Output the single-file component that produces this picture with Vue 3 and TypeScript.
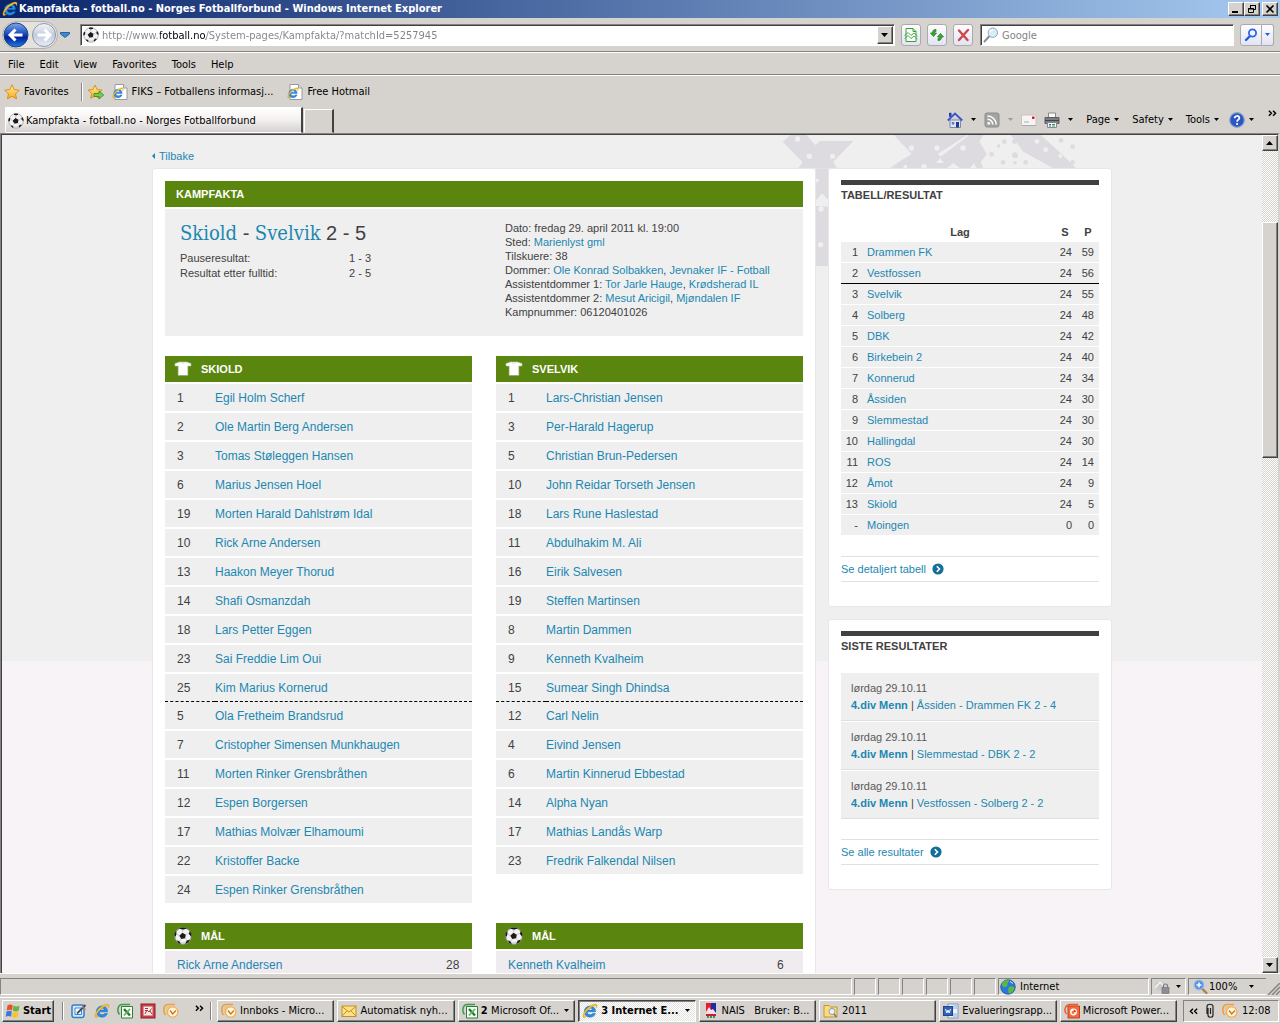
<script setup lang="ts">
interface Player { no: number; name: string }
interface Team { title: string; players: Player[]; goals: { name: string; minute: number }[] }
interface Standing { pos: string; team: string; played: number; points: number }

const toPlayers = (rows: [number, string][]): Player[] => rows.map(([no, name]) => ({ no, name }))

const starters = 11

const teams: Team[] = [
  {
    title: 'SKIOLD',
    players: toPlayers([
      [1, 'Egil Holm Scherf'], [2, 'Ole Martin Berg Andersen'], [3, 'Tomas Støleggen Hansen'],
      [6, 'Marius Jensen Hoel'], [19, 'Morten Harald Dahlstrøm Idal'], [10, 'Rick Arne Andersen'],
      [13, 'Haakon Meyer Thorud'], [14, 'Shafi Osmanzdah'], [18, 'Lars Petter Eggen'],
      [23, 'Sai Freddie Lim Oui'], [25, 'Kim Marius Kornerud'], [5, 'Ola Fretheim Brandsrud'],
      [7, 'Cristopher Simensen Munkhaugen'], [11, 'Morten Rinker Grensbråthen'], [12, 'Espen Borgersen'],
      [17, 'Mathias Molvær Elhamoumi'], [22, 'Kristoffer Backe'], [24, 'Espen Rinker Grensbråthen'],
    ]),
    goals: [{ name: 'Rick Arne Andersen', minute: 28 }],
  },
  {
    title: 'SVELVIK',
    players: toPlayers([
      [1, 'Lars-Christian Jensen'], [3, 'Per-Harald Hagerup'], [5, 'Christian Brun-Pedersen'],
      [10, 'John Reidar Torseth Jensen'], [18, 'Lars Rune Haslestad'], [11, 'Abdulhakim M. Ali'],
      [16, 'Eirik Salvesen'], [19, 'Steffen Martinsen'], [8, 'Martin Dammen'],
      [9, 'Kenneth Kvalheim'], [15, 'Sumear Singh Dhindsa'], [12, 'Carl Nelin'],
      [4, 'Eivind Jensen'], [6, 'Martin Kinnerud Ebbestad'], [14, 'Alpha Nyan'],
      [17, 'Mathias Landås Warp'], [23, 'Fredrik Falkendal Nilsen'],
    ]),
    goals: [{ name: 'Kenneth Kvalheim', minute: 6 }],
  },
]

const standings: Standing[] = ([
  ['1', 'Drammen FK', 24, 59], ['2', 'Vestfossen', 24, 56], ['3', 'Svelvik', 24, 55],
  ['4', 'Solberg', 24, 48], ['5', 'DBK', 24, 42], ['6', 'Birkebein 2', 24, 40],
  ['7', 'Konnerud', 24, 34], ['8', 'Åssiden', 24, 30], ['9', 'Slemmestad', 24, 30],
  ['10', 'Hallingdal', 24, 30], ['11', 'ROS', 24, 14], ['12', 'Åmot', 24, 9],
  ['13', 'Skiold', 24, 5], ['-', 'Moingen', 0, 0],
] as [string, string, number, number][]).map(([pos, team, played, points]) => ({ pos, team, played, points }))

const results = ['Åssiden - Drammen FK 2 - 4', 'Slemmestad - DBK 2 - 2', 'Vestfossen - Solberg 2 - 2']
const menus = ['File', 'Edit', 'View', 'Favorites', 'Tools', 'Help']
const quick = ['i-desk', 'i-ie', 'i-excel', 'i-access', 'i-outlook']
const tasks = [
  { icon: 'i-outlook', count: '', label: 'Innboks - Micro...', more: false, active: false },
  { icon: 'i-mail', count: '', label: 'Automatisk nyh...', more: false, active: false },
  { icon: 'i-excel', count: '2 ', label: 'Microsoft Of...', more: true, active: false },
  { icon: 'i-ie', count: '', label: '3 Internet E...', more: true, active: true },
  { icon: 'i-nais', count: '', label: 'NAIS   Bruker: B...', more: false, active: false },
  { icon: 'i-folder', count: '', label: '2011', more: false, active: false },
  { icon: 'i-word', count: '', label: 'Evalueringsrapp...', more: false, active: false },
  { icon: 'i-ppt', count: '', label: 'Microsoft Power...', more: false, active: false },
]
</script>

<template>
  <svg class="defs" width="0" height="0" aria-hidden="true">
    <defs>
      <linearGradient id="g-blue" x1="0" y1="0" x2="0" y2="1">
        <stop offset="0" stop-color="#7fa6ea" /><stop offset=".45" stop-color="#1a4cc0" /><stop offset=".6" stop-color="#02209a" /><stop offset="1" stop-color="#1f7fe8" />
      </linearGradient>
      <linearGradient id="g-pale" x1="0" y1="0" x2="0" y2="1">
        <stop offset="0" stop-color="#f4f6fa" /><stop offset=".5" stop-color="#c3cbdc" /><stop offset="1" stop-color="#e8edf6" />
      </linearGradient>
      <linearGradient id="g-star" x1="0" y1="0" x2="0" y2="1">
        <stop offset="0" stop-color="#fff2a0" /><stop offset="1" stop-color="#f7a81b" />
      </linearGradient>
    </defs>
    <symbol id="i-ie" viewBox="0 0 16 16">
      <path d="M13.500 8.800H5.200c.1 2 1.300 3 3 3 1.200 0 2-.5 2.500-1.200h2.700c-.8 2.300-2.800 3.600-5.300 3.600-3.400 0-5.700-2.300-5.700-5.600C2.400 5.300 4.800 3 8 3c3.500 0 5.700 2.300 5.500 5.800zM5.300 7.100h5.300C10.400 5.700 9.500 5 8 5 6.500 5 5.600 5.800 5.300 7.100z" fill="#2b8ee6" stroke="#0f5fb8" stroke-width=".5" />
      <path d="M1.500 14.500C-.6 12.600 3.200 6 7.800 3.200 11 1 14.400.2 15 2c.3.900 0 2-.6 3.100.1-1.400-.2-2.400-1.400-2.300C10 3 4 8 2.600 11.600c-.6 1.600.1 2.200 1.900 1.500-1.300 1.400-2.400 1.900-3 1.400z" fill="#f6c02c" stroke="#c48a10" stroke-width=".3" />
    </symbol>
    <symbol id="i-ball" viewBox="0 0 16 16">
      <circle cx="8" cy="8" r="7.300" fill="#f2f2f2" stroke="#a2a2a2" stroke-width=".8" />
      <path d="M3 13a7 7 0 0 0 11-2c-2 2-7 3.500-11 2z" fill="#cfcfcf" />
      <path d="M7.500 5l3 1.800-.6 3.300-3.400.6L4.700 7.800z" fill="#1a1a1a" />
      <path d="M6 1.300l2 .7 2-.7L8 .9zM1 8.200l.8-2.200-.2-1-.6 1zM15 7.500l-1.300-1.500.5-1.300.7 1.300zM3.500 12.800l1 .2.600 1.300-.9-.4zM13.200 12l-1.500.4-.6 1.600 1.300-.8z" fill="#1a1a1a" stroke="#1a1a1a" />
      <path d="M8 2l-.5 3M2 5.700l2.700 2.100M13.500 5.500l-3 1.300M6.500 10.700l-1.900 2.100M9.900 10.100l1.700 2.100" stroke="#b5b5b5" stroke-width=".6" />
    </symbol>
    <symbol id="i-shirt" viewBox="0 0 18 16">
      <path d="M1 2.500L5.500 1h7L17 2.500V5h-3.200v9.500H4.200V5H1z" fill="#fff" stroke="#b9c9a0" stroke-width=".6" />
      <path d="M4.200 14.500h9.600" stroke="#9aa58a" />
      <path d="M6.500 1.200c1 1.200 4 1.200 5 0" fill="none" stroke="#ddd" />
    </symbol>
    <symbol id="i-star" viewBox="0 0 16 16">
      <path d="M8 .8l2.200 4.800 5.200.6-3.900 3.500 1.100 5.200L8 12.300l-4.600 2.600 1.100-5.200L.6 6.200l5.200-.6z" fill="url(#g-star)" stroke="#d98a10" stroke-width=".9" stroke-linejoin="round" />
    </symbol>
    <symbol id="i-stargo" viewBox="0 0 16 16">
      <path d="M7 1l2 4.500 5 .5-3.700 3.300 1 5L7 11.800 2.700 14.300l1-5L0 6l5-.5z" fill="url(#g-star)" stroke="#d98a10" stroke-width=".9" stroke-linejoin="round" />
      <path d="M6 9.500h5V7l4.700 4-4.700 4v-2.500H6z" fill="#6fcf53" stroke="#2c8a1c" stroke-width=".8" />
    </symbol>
    <symbol id="i-iepage" viewBox="0 0 16 16">
      <path d="M3 .5h8.500L15 4v11.500H3z" fill="#fff" stroke="#9a9a9a" /><path d="M11.500.5V4H15" fill="#e4e4e4" stroke="#9a9a9a" />
      <use href="#i-ie" x="0" y="3" width="12" height="12" />
    </symbol>
    <symbol id="i-home" viewBox="0 0 16 16">
      <path d="M3 8h10.500v7.500H3z" fill="#dfe5f4" stroke="#7c89b0" /><path d="M2 .8h2.500v4H2z" fill="#2440b8" />
      <path d="M.8 8.500L8 1.500l7.300 7" fill="none" stroke="#3a55c4" stroke-width="1.800" /><path d="M9 10h3v5.500H9z" fill="#223c8c" /><path d="M4.800 10h2.400v2.500H4.800z" fill="#5b76c8" />
    </symbol>
    <symbol id="i-rss" viewBox="0 0 16 16">
      <rect x="1" y="1" width="14" height="14" rx="2" fill="#a3a3a3" stroke="#8b8b8b" />
      <circle cx="4.800" cy="11.300" r="1.400" fill="#fff" /><path d="M3.500 7.200a5.300 5.300 0 0 1 5.300 5.300M3.500 3.900a8.700 8.700 0 0 1 8.700 8.700" fill="none" stroke="#fff" stroke-width="1.500" />
    </symbol>
    <symbol id="i-letter" viewBox="0 0 16 16">
      <rect x=".5" y="3" width="14.500" height="10.500" fill="#f7f4f4" stroke="#c9c4c4" /><rect x="11" y="4.500" width="2.500" height="2.500" fill="#d3202c" /><path d="M3 10h5M1 13.500h14" stroke="#a9a9b4" />
    </symbol>
    <symbol id="i-print" viewBox="0 0 16 16">
      <path d="M4.500 1h7v5h-7z" fill="#fafafa" stroke="#888" /><path d="M1 5.500h14v6H1z" fill="#7b7f84" stroke="#5c5f63" /><path d="M1 8.500h14" stroke="#44464a" />
      <path d="M3.500 10.500h9v5h-9z" fill="#f4f6f8" stroke="#888" /><path d="M5 12.500h2M5 14h2" stroke="#2b6fc8" /><path d="M8 12.500h3M8 14h3" stroke="#3f9a50" />
    </symbol>
    <symbol id="i-help" viewBox="0 0 16 16">
      <circle cx="8" cy="8" r="7.300" fill="#2c56c4" stroke="#8fa0c8" stroke-width="1.200" />
      <path d="M5.700 6.300C5.700 3.200 10.500 3.300 10.400 6c0 1.700-2.300 1.700-2.300 3.700" fill="none" stroke="#fff" stroke-width="1.700" /><circle cx="8.100" cy="12" r="1.100" fill="#fff" />
    </symbol>
    <symbol id="i-glass" viewBox="0 0 16 16">
      <path d="M1.500 14.500l4.500-5" stroke="#8b8f96" stroke-width="2" stroke-linecap="round" /><circle cx="9.800" cy="5.700" r="4.700" fill="#d8ecfa" stroke="#90a4b4" />
      <path d="M7 5c.3-1.500 1.500-2.300 3-2.300" fill="none" stroke="#fff" stroke-width="1.300" />
    </symbol>
    <symbol id="i-find" viewBox="0 0 16 16">
      <path d="M3 13l3.500-3.500" stroke="#1f5be0" stroke-width="2.400" stroke-linecap="round" /><circle cx="9.500" cy="6" r="3.600" fill="#f2f6ff" stroke="#2a66ea" stroke-width="1.800" />
    </symbol>
    <symbol id="i-zoom" viewBox="0 0 16 16">
      <path d="M9 9.500l4.500 4.500" stroke="#b07a3a" stroke-width="2.200" stroke-linecap="round" /><circle cx="6" cy="6" r="4.800" fill="#4f93ec" stroke="#9fb7d8" stroke-width="1.200" /><path d="M3.500 6h5M6 3.500v5" stroke="#fff" stroke-width="1.500" />
    </symbol>
    <symbol id="i-compat" viewBox="0 0 16 16">
      <path d="M3 1.500h7L13 4.500V14.500H3z" fill="#fff" stroke="#38a038" /><path d="M10 1.500v3h3" fill="none" stroke="#38a038" />
      <path d="M1.500 8.500L5 5.500l3 3L11 6l3.500 3M1.500 11.500L5 8.500l3 3L11 9l3.500 3" fill="none" stroke="#49a849" />
    </symbol>
    <symbol id="i-refresh" viewBox="0 0 16 16">
      <path d="M1.500 6h2C3.500 3.500 4.500 2.500 7 2.500v2C6.200 4.500 5.500 5 5.500 6h2l-3 3.500z" fill="#3aa832" stroke="#22801c" stroke-width=".8" />
      <path d="M14.500 10h-2c0 2.500-1 3.500-3.500 3.500v-2c.8 0 1.500-.5 1.500-1.500h-2l3-3.500z" fill="#3aa832" stroke="#22801c" stroke-width=".8" />
    </symbol>
    <symbol id="i-stop" viewBox="0 0 16 16"><path d="M4 3.500l8.500 9.500M13 3L4 13" stroke="#cc4a4a" stroke-width="2.400" stroke-linecap="round" /></symbol>
    <symbol id="i-flag" viewBox="0 0 16 16">
      <path d="M2.500 2.500Q5 .8 7.700 2.300L7 7.500Q4.500 6 1.700 7.600z" fill="#e8502c" /><path d="M8.500 2.600q2.700 1.600 6 .2l-.9 5q-2.800 1.400-5.800-.2z" fill="#6cb33a" />
      <path d="M1.500 8.600q2.700-1.500 5.300-.1l-.7 5.200Q3.500 12.200.7 13.700z" fill="#3a78dc" /><path d="M7.700 8.700q2.900 1.500 5.900.2l-.9 5.100q-2.900 1.300-5.700-.1z" fill="#f8c32c" />
    </symbol>
    <symbol id="i-desk" viewBox="0 0 16 16">
      <rect x="1" y="2" width="12" height="12.500" rx="2" fill="#d6e8fa" stroke="#2f7fd0" stroke-width="1.500" /><path d="M4 5h6.500v6.500H4z" fill="#fff" stroke="#3c86cc" /><path d="M6 10.500L14.500 2" stroke="#3d4d66" stroke-width="1.800" /><path d="M11 3.500l3.500 3" stroke="#e07a30" stroke-width="1.500" />
    </symbol>
    <symbol id="i-excel" viewBox="0 0 16 16">
      <path d="M4.500 3.500h11v11.500h-11z" fill="#f8fcf8" stroke="#2f7d38" /><path d="M2.500 11.500C0 9 0 1.500 5.500 1.500H13" fill="none" stroke="#3f9a48" stroke-width="1.500" />
      <path d="M7 6l6 6.500" stroke="#247a30" stroke-width="2.400" /><path d="M13 6l-6 6.500" stroke="#5fb45c" stroke-width="1.800" />
    </symbol>
    <symbol id="i-access" viewBox="0 0 16 16">
      <rect x="1" y="1" width="14" height="14" fill="#c8404a" stroke="#8e1c28" /><path d="M3.500 3.500h9v9h-9z" fill="#f8e8e8" /><path d="M5 11l2-4 2 2 2.500-3.500M5 5.500h3M5 7.500h2M10 8l2 3" fill="none" stroke="#a8323c" />
    </symbol>
    <symbol id="i-outlook" viewBox="0 0 16 16">
      <path d="M2.500 12C0 9 0 1.500 5 1.500h7" fill="none" stroke="#eda040" stroke-width="1.700" /><path d="M4 12V4h7" fill="none" stroke="#f2b868" />
      <circle cx="9.700" cy="9" r="5.200" fill="#fff4dc" stroke="#efb25a" stroke-width="1.300" /><path d="M7 7.500L9.700 11 13 7.500" fill="none" stroke="#c77a1c" stroke-width="1.400" />
    </symbol>
    <symbol id="i-mail" viewBox="0 0 16 16"><rect x="1" y="3" width="14" height="10.500" fill="#fbe18a" stroke="#c98f1a" /><path d="M1 3.500l7 5.500 7-5.500M1 13l5-5M15 13l-5-5" fill="none" stroke="#c98f1a" /></symbol>
    <symbol id="i-nais" viewBox="0 0 16 16"><path d="M3 0h5v11H3z" fill="#e81c24" /><path d="M8 0h5v11H8z" fill="#1c2ca8" /><path d="M3 9l3-5 2 3 2-1 3 4v1H3z" fill="#f4dfe4" /><path d="M3 11h10v2H3z" fill="#c81c34" /><path d="M4 14h8" stroke="#4a8a5a" stroke-width="2" stroke-dasharray="2 1" /></symbol>
    <symbol id="i-folder" viewBox="0 0 16 16"><path d="M1 2.500h5l1.500 1.500H14V14H1z" fill="#fbdc7c" stroke="#c8942a" /><circle cx="9" cy="8.500" r="3" fill="#e8f4fc" stroke="#8a9aaa" /><path d="M11 11l2.500 3" stroke="#7a7a7a" stroke-width="1.600" /></symbol>
    <symbol id="i-word" viewBox="0 0 16 16"><path d="M5 1h10v14H5z" fill="#eef4fc" stroke="#7a98c8" /><path d="M10 11h4M10 13h4M10 5h4M10 3h4" stroke="#8aa8d8" /><rect x=".5" y="3.500" width="9" height="9" fill="#2f62b8" stroke="#1c4690" /><path d="M2.500 6l1.300 4L5 7l1.200 3 1.300-4" fill="none" stroke="#fff" /></symbol>
    <symbol id="i-ppt" viewBox="0 0 16 16"><path d="M4 3h11.500v12H4z" fill="#f26a3c" stroke="#c8401c" /><path d="M2.500 11C-.5 8 1 1.500 6.500 1.500H14" fill="none" stroke="#e8582c" stroke-width="1.500" /><circle cx="9.500" cy="9" r="3.400" fill="#fff" /><path d="M9.500 9V6.500A2.500 2.500 0 0 1 12 9z" fill="#d8481c" /><circle cx="9" cy="9.500" r="1.400" fill="#f26a3c" /></symbol>
    <symbol id="i-globe" viewBox="0 0 16 16"><circle cx="8" cy="8" r="7.300" fill="#2a78d8" stroke="#1c4a90" stroke-width=".7" /><path d="M2 4c2-3 6-3.500 7-2.500S7 4 7.500 5.500 4.500 9 3.500 8 1.500 6 2 4zM9 8c2-1.500 5-.5 5.500 1S12 14 10 14.500 7.500 10 9 8z" fill="#58b848" /><path d="M10 2.500l3 2" stroke="#c8e8f8" /></symbol>
    <symbol id="i-lock" viewBox="0 0 16 16"><circle cx="6" cy="7" r="5" fill="#c9c9c9" /><path d="M1 9l5-6 4 4" fill="none" stroke="#f4f4f4" stroke-width="1.500" /><rect x="8" y="8.500" width="7" height="6" fill="#8e8e92" stroke="#6c6c70" stroke-width=".6" /><path d="M9.500 8.500V6.500c0-2 4-2 4 0v2" fill="none" stroke="#7a7a7e" stroke-width="1.200" /></symbol>
    <symbol id="i-clip" viewBox="0 0 16 16"><path d="M6 5v7c0 3 5 3 5 0V3.500C11 .5 5 .5 5 3.500V11M8.500 5v6" fill="none" stroke="#222" stroke-width="1.200" /></symbol>
    <symbol id="i-go" viewBox="0 0 12 12"><circle cx="6" cy="6" r="5.600" fill="#126f9c" /><path d="M4.800 3.300L7.500 6 4.800 8.700" fill="none" stroke="#fff" stroke-width="1.600" /></symbol>
    <symbol id="i-down" viewBox="0 0 6 4"><path d="M0 0h5L2.500 3z" fill="currentColor" /></symbol>
    <symbol id="i-more" viewBox="0 0 8 6"><path d="M.8.500L3 2.800.8 5M4.500.5l2.200 2.300L4.500 5" fill="none" stroke="#000" stroke-width="1.300" /></symbol>
  </svg>

  <div class="desktop">
    <header class="titlebar">
      <svg class="ic"><use href="#i-ie" /></svg>
      <h1>Kampfakta - fotball.no - Norges Fotballforbund - Windows Internet Explorer</h1>
      <div class="winbtns">
        <button class="raised" aria-label="Minimize"><svg viewBox="0 0 12 10"><path d="M2 8h6" stroke="#000" stroke-width="2" /></svg></button>
        <button class="raised" aria-label="Restore"><svg viewBox="0 0 12 10"><path d="M4.500 4V1.500h5v4H8M4 1.500h6M2.500 4.500h5v4h-5zM2 5h6" fill="none" stroke="#000" /></svg></button>
        <button class="raised close" aria-label="Close"><svg viewBox="0 0 12 10"><path d="M2.500 1.500l7 7M9.500 1.500l-7 7" stroke="#000" stroke-width="1.600" /></svg></button>
      </div>
    </header>

    <div class="navbar">
      <div class="travel">
        <button aria-label="Back"><svg viewBox="0 0 26 26"><circle cx="13" cy="13" r="12" fill="url(#g-blue)" stroke="#24407c" /><path d="M19.500 13H8M12.500 7.500L7 13l5.500 5.500" fill="none" stroke="#fff" stroke-width="3" /></svg></button>
        <button aria-label="Forward"><svg viewBox="0 0 26 26"><circle cx="13" cy="13" r="11.500" fill="url(#g-pale)" stroke="#8e98ac" /><path d="M6.500 13H18M13.500 7.500L19 13l-5.500 5.500" fill="none" stroke="#fff" stroke-width="3" /></svg></button>
      </div>
      <button class="recent" aria-label="Recent pages"><svg viewBox="0 0 10 6"><path d="M.5.500h9v1.500L5 5.500.5 2z" fill="#3a8ad8" stroke="#14508c" stroke-width=".8" /></svg></button>
      <div class="field address">
        <svg class="ic"><use href="#i-ball" /></svg>
        <input type="text" aria-label="Address" value="http://www.fotball.no/System-pages/Kampfakta/?matchId=5257945" />
        <button class="raised drop" aria-label="Show addresses"><svg viewBox="0 0 8 4"><path d="M0 0h7L3.500 4z" /></svg></button>
      </div>
      <button class="tool" aria-label="Compatibility view"><svg class="ic"><use href="#i-compat" /></svg></button>
      <button class="tool" aria-label="Refresh"><svg class="ic"><use href="#i-refresh" /></svg></button>
      <button class="tool" aria-label="Stop"><svg class="ic"><use href="#i-stop" /></svg></button>
      <div class="field search">
        <svg class="ic"><use href="#i-glass" /></svg>
        <input type="text" aria-label="Search" placeholder="Google" />
      </div>
      <div class="find">
        <button class="tool" aria-label="Search"><svg class="ic"><use href="#i-find" /></svg></button>
        <button class="tool slim" aria-label="Search options"><svg class="dn"><use href="#i-down" /></svg></button>
      </div>
    </div>

    <nav class="menubar"><button v-for="m in menus" :key="m">{{ m }}</button></nav>

    <div class="favbar">
      <button class="fav"><svg class="ic"><use href="#i-star" /></svg>Favorites</button>
      <i class="sep"></i>
      <button class="add" aria-label="Add to favorites bar"><svg class="ic"><use href="#i-stargo" /></svg></button>
      <a href="#fiks"><svg class="ic"><use href="#i-iepage" /></svg>FIKS – Fotballens informasj...</a>
      <a href="#hotmail"><svg class="ic"><use href="#i-iepage" /></svg>Free Hotmail</a>
    </div>

    <div class="tabbar">
      <button class="tab"><svg class="ic"><use href="#i-ball" /></svg>Kampfakta - fotball.no - Norges Fotballforbund</button>
      <button class="newtab" aria-label="New tab"></button>
      <div class="commands">
        <button aria-label="Home"><svg class="ic"><use href="#i-home" /></svg><svg class="dn"><use href="#i-down" /></svg></button>
        <button aria-label="Feeds"><svg class="ic"><use href="#i-rss" /></svg><svg class="dn dim"><use href="#i-down" /></svg></button>
        <button aria-label="Read mail"><svg class="ic"><use href="#i-letter" /></svg></button>
        <button aria-label="Print"><svg class="ic"><use href="#i-print" /></svg><svg class="dn"><use href="#i-down" /></svg></button>
        <button class="word">Page<svg class="dn"><use href="#i-down" /></svg></button>
        <button class="word">Safety<svg class="dn"><use href="#i-down" /></svg></button>
        <button class="word">Tools<svg class="dn"><use href="#i-down" /></svg></button>
        <button class="help" aria-label="Help"><svg class="ic"><use href="#i-help" /></svg><svg class="dn"><use href="#i-down" /></svg></button>
        <button class="chev" aria-label="More commands"><svg class="mo"><use href="#i-more" /></svg></button>
      </div>
    </div>

    <div class="viewport">
      <main class="page">
        <div class="wrap">
          <svg class="deco" viewBox="0 15 1050 393" aria-hidden="true">
            <g fill="#dddbdf">
              <path d="M38 35L62 15H110L136 45 150 33H250L190 95 200 115H85L98 97z" />
              <path d="M137 115H176V408H137z" />
              <path d="M372 15H592L503 72 512 80 598 15H640L628 35 650 72 632 97 640 115H360L385 97 425 72 372 15z" />
              <path d="M722 15H812L868 65 918 115H850L760 65z" />
              <circle cx="703" cy="35" r="7" /><circle cx="733" cy="35" r="7" /><circle cx="767" cy="28" r="7" /><circle cx="686" cy="48" r="5" />
              <circle cx="665" cy="73" r="7" /><circle cx="699" cy="97" r="7" /><circle cx="735" cy="76" r="9" /><circle cx="767" cy="97" r="7" />
              <circle cx="735" cy="98" r="5" /><circle cx="873" cy="31" r="7" /><circle cx="908" cy="50" r="7" /><circle cx="908" cy="97" r="7" /><circle cx="800" cy="82" r="5" />
            </g>
            <g fill="#efefef">
              <circle cx="83" cy="27" r="8" /><circle cx="118" cy="79" r="8" /><circle cx="188" cy="79" r="8" /><circle cx="424" cy="54" r="8" />
              <circle cx="501" cy="54" r="8" /><circle cx="579" cy="54" r="8" /><circle cx="462" cy="110" r="8" /><circle cx="406" cy="110" r="6" />
              <circle cx="801" cy="34" r="7" /><circle cx="827" cy="59" r="7" /><circle cx="871" cy="78" r="6" />
              <path d="M498 99L510 84 522 99zM530 115L550 99 570 115zM600 115L612 99 620 115z" />
              <path d="M137 145L150 150 137 160zM137 212L156 190 176 212 160 228 137 228zM176 205V230L150 228z" />
              <circle cx="153" cy="237" r="8" /><circle cx="152" cy="344" r="8" />
            </g>
          </svg>
          <a class="back" href="#tilbake"><svg viewBox="0 0 3 6"><path d="M3 0v6L0 3z" fill="#1c87b1" /></svg>Tilbake</a>

          <div class="cols">
            <article class="card main">
              <h2 class="bar">KAMPFAKTA</h2>
              <section class="facts">
                <div class="score">
                  <h3><a href="#skiold">Skiold</a> - <a href="#svelvik">Svelvik</a> 2 - 5</h3>
                  <dl>
                    <dt>Pauseresultat:</dt><dd>1 - 3</dd>
                    <dt>Resultat etter fulltid:</dt><dd>2 - 5</dd>
                  </dl>
                </div>
                <ul class="info">
                  <li>Dato: fredag 29. april 2011 kl. 19:00</li>
                  <li>Sted: <a href="#sted">Marienlyst gml</a></li>
                  <li>Tilskuere: 38</li>
                  <li>Dommer: <a href="#d1">Ole Konrad Solbakken</a>, <a href="#k1">Jevnaker IF - Fotball</a></li>
                  <li>Assistentdommer 1: <a href="#d2">Tor Jarle Hauge</a>, <a href="#k2">Krødsherad IL</a></li>
                  <li>Assistentdommer 2: <a href="#d3">Mesut Aricigil</a>, <a href="#k3">Mjøndalen IF</a></li>
                  <li>Kampnummer: 06120401026</li>
                </ul>
              </section>

              <div class="pair">
                <section v-for="t in teams" :key="t.title">
                  <h2 class="bar"><svg class="badge"><use href="#i-shirt" /></svg>{{ t.title }}</h2>
                  <table class="squad">
                    <tbody>
                      <tr v-for="(p, i) in t.players" :key="p.no" :class="{ last: i === starters - 1 }">
                        <td class="no">{{ p.no }}</td>
                        <td><a href="#spiller">{{ p.name }}</a></td>
                      </tr>
                    </tbody>
                  </table>
                </section>
              </div>

              <div class="pair">
                <section v-for="t in teams" :key="t.title">
                  <h2 class="bar"><svg class="badge"><use href="#i-ball" /></svg>MÅL</h2>
                  <table class="squad goals">
                    <tbody>
                      <tr v-for="g in t.goals" :key="g.name">
                        <td><a href="#spiller">{{ g.name }}</a></td>
                        <td class="min">{{ g.minute }}</td>
                      </tr>
                    </tbody>
                  </table>
                </section>
              </div>
            </article>

            <aside>
              <section class="card side">
                <h2>TABELL/RESULTAT</h2>
                <table class="league">
                  <thead><tr><th></th><th>Lag</th><th>S</th><th>P</th></tr></thead>
                  <tbody>
                    <tr v-for="(s, i) in standings" :key="s.team" :class="{ cut: i === 1 }">
                      <td class="pos">{{ s.pos }}</td>
                      <td class="team"><a href="#lag">{{ s.team }}</a></td>
                      <td class="num">{{ s.played }}</td>
                      <td class="num">{{ s.points }}</td>
                    </tr>
                  </tbody>
                </table>
                <p class="more"><a href="#tabell">Se detaljert tabell<svg><use href="#i-go" /></svg></a></p>
              </section>
              <section class="card side">
                <h2>SISTE RESULTATER</h2>
                <ul class="results">
                  <li v-for="r in results" :key="r">
                    <time>lørdag 29.10.11</time>
                    <div><a href="#div"><b>4.div Menn</b></a> | <a href="#kamp">{{ r }}</a></div>
                  </li>
                </ul>
                <p class="more"><a href="#resultater">Se alle resultater<svg><use href="#i-go" /></svg></a></p>
              </section>
            </aside>
          </div>
        </div>
      </main>
      <div class="scroll">
        <button class="raised" aria-label="Scroll up"><svg viewBox="0 0 8 4"><path d="M0 4h7L3.500 0z" /></svg></button>
        <i class="before"></i>
        <i class="thumb raised"></i>
        <i class="after"></i>
        <button class="raised" aria-label="Scroll down"><svg viewBox="0 0 8 4"><path d="M0 0h7L3.500 4z" /></svg></button>
      </div>
    </div>

    <footer class="status">
      <span class="panel grow"></span>
      <span v-for="n in 6" :key="n" class="panel small"></span>
      <span class="panel zone"><svg class="ic"><use href="#i-globe" /></svg>Internet</span>
      <button class="panel prot" aria-label="Protected mode"><svg class="ic"><use href="#i-lock" /></svg><svg class="dn"><use href="#i-down" /></svg></button>
      <button class="panel mag"><svg class="ic"><use href="#i-zoom" /></svg>100%<svg class="dn"><use href="#i-down" /></svg></button>
      <svg class="grip" viewBox="0 0 12 12"><path d="M0 12L12 0M4 12l8-8M8 12l4-4" stroke="#848284" stroke-width="1.500" /></svg>
    </footer>

    <div class="taskbar">
      <button class="raised start"><svg class="ic"><use href="#i-flag" /></svg>Start</button>
      <i class="sep"></i>
      <div class="quick">
        <button v-for="q in quick" :key="q" :aria-label="q.slice(2)"><svg class="ic"><use :href="'#' + q" /></svg></button>
      </div>
      <svg class="mo"><use href="#i-more" /></svg>
      <i class="sep"></i>
      <div class="tasks">
        <button v-for="t in tasks" :key="t.label" class="raised" :class="{ active: t.active }">
          <svg class="ic"><use :href="'#' + t.icon" /></svg>
          <span><b v-if="t.count" v-text="t.count"></b>{{ t.label }}</span>
          <svg v-if="t.more" class="dn"><use href="#i-down" /></svg>
        </button>
      </div>
      <div class="tray">
        <svg class="mo flip"><use href="#i-more" /></svg>
        <svg class="ic"><use href="#i-clip" /></svg>
        <svg class="ic"><use href="#i-outlook" /></svg>
        <time>12:08</time>
      </div>
    </div>
  </div>
</template>

<style>
body { background: #d6d3ce; }
</style>

<style scoped>
* { box-sizing: border-box; }
h1, h2, h3, p, ul, dl, dd { margin: 0; padding: 0; }
ul { list-style: none; }
button { font: inherit; color: inherit; background: none; border: 0; padding: 0; display: flex; align-items: center; white-space: nowrap; }
a { color: #1c87b1; text-decoration: none; }
svg { display: block; flex: none; }
.defs { position: absolute; }
.ic { width: 16px; height: 16px; }
.dn { width: 6px; height: 4px; }
.dim { color: #9a9a9a; }
.mo { width: 9px; height: 7px; }

.desktop {
  display: flex; flex-direction: column; height: 100vh; overflow: hidden;
  background: #d6d3ce; color: #000;
  font: 11px/14px "DejaVu Sans Condensed", "DejaVu Sans", sans-serif;
}
.raised {
  background: #d6d3ce; border: 1px solid; border-color: #fff #424142 #424142 #fff;
  box-shadow: inset -1px -1px 0 #848284; justify-content: center;
}

.titlebar { display: flex; align-items: center; height: 18px; flex: none; padding: 0 2px; background: linear-gradient(90deg, #0a246a, #a6caf0); color: #fff; }
.titlebar h1 { font-size: 11px; line-height: 16px; margin-left: 1px; flex: 1; }
.winbtns { display: flex; }
.winbtns button { width: 16px; height: 14px; }
.winbtns .close { margin-left: 2px; }
.winbtns svg { width: 12px; height: 10px; }

.navbar { display: flex; align-items: center; gap: 6px; height: 35px; flex: none; padding: 0 6px 0 2px; border-bottom: 1px solid #fff; box-shadow: inset 0 -1px 0 #848284; }
.travel { display: flex; gap: 2px; border: 1px solid #b5b2ad; border-radius: 14px; background: #e4e2de; }
.travel svg { width: 26px; height: 26px; }
.recent { width: 10px; margin: 0 4px 0 -4px; }
.recent svg { width: 10px; height: 6px; }
.field { display: flex; align-items: center; height: 22px; background: #fff; border: 1px solid; border-color: #848284 #fff #fff #848284; box-shadow: inset 1px 1px 0 #424142; padding: 1px 1px 1px 3px; }
.field input { flex: 1; min-width: 0; border: 0; outline: 0; padding: 0; height: 16px; font: inherit; background: none; }
.address { flex: 1; gap: 3px; padding-left: 2px; }
.address input {
  color: transparent; -webkit-background-clip: text; background-clip: text;
  background-image: linear-gradient(90deg, #848284 58px, #000 58px, #000 104px, #848284 104px);
}
.drop { width: 16px; height: 18px; }
.drop svg, .scroll svg { width: 8px; height: 4px; }
.search { width: 254px; gap: 3px; margin-left: 1px; padding-left: 2px; }
.search input::placeholder { color: #848284; opacity: 1; }
.tool { width: 20px; height: 22px; justify-content: center; border: 1px solid #a9a8b4; border-radius: 3px; background: linear-gradient(#fdfdff, #e2e4f2); }
.find { display: flex; }
.find .tool { border-radius: 3px 0 0 3px; width: 22px; color: #1f5be0; }
.find .slim { border-radius: 0 3px 3px 0; border-left: 0; width: 12px; }

.menubar { display: flex; align-items: center; gap: 15px; height: 23px; flex: none; padding: 1px 0 0 8px; border-bottom: 1px solid #fff; box-shadow: inset 0 -1px 0 #848284; }
.favbar { display: flex; align-items: center; height: 30px; flex: none; padding: 2px 0 0 4px; }
.favbar a, .favbar button { display: flex; align-items: center; gap: 4px; color: #000; }
.favbar a { margin-left: 8px; }
.favbar a + a { margin-left: 14px; }
.sep { width: 2px; height: 18px; border-left: 1px solid #848284; border-right: 1px solid #fff; }
.favbar .sep { margin: 0 5px 0 12px; }

.tabbar { display: flex; align-items: flex-end; height: 27px; flex: none; padding-left: 5px; }
.tab { width: 298px; height: 26px; gap: 2px; padding: 2px 2px 0; border: 1px solid; border-color: #fff #424142 transparent #fff; border-right-width: 2px; background: linear-gradient(#fff, #f4f0f0 50%, #d6d0d0); }
.newtab { width: 30px; height: 24px; margin-left: 1px; border: 1px solid; border-color: #fff #424142 transparent #fff; border-right-width: 2px; }
.commands { display: flex; align-items: center; height: 27px; margin-left: auto; padding-right: 3px; gap: 7px; }
.commands button { gap: 8px; }
.commands .word { gap: 4px; margin-left: 5px; }
.commands .help { gap: 4px; margin-left: 2px; }
.commands .chev { align-self: flex-start; margin: 4px 0 0 6px; }

.viewport { display: flex; flex: 1; min-height: 0; border-top: 1px solid #848284; border-left: 1px solid #848284; border-right: 2px solid #d6d3ce; box-shadow: inset 1px 1px 0 #424142; padding: 1px 0 0 1px; }
.page { flex: 1; min-width: 0; overflow: hidden; background: linear-gradient(#efefef 526px, #f7f3f7 526px); color: #424142; font: 11px/14px "Liberation Sans", Arial, sans-serif; }
.wrap { position: relative; max-width: 960px; margin: 0 auto; padding-top: 14px; }
.deco { position: absolute; left: 618px; top: 0; width: 350px; height: 131px; }
.back { display: flex; align-items: center; gap: 4px; height: 14px; margin-bottom: 5px; }
.back svg { width: 3px; height: 6px; }
.cols { position: relative; display: flex; align-items: flex-start; gap: 12px; }
.card { background: #fff; border: 1px solid #e7e7e7; border-radius: 3px; padding: 12px; }
.main { flex: 1; min-width: 0; }
.bar { display: flex; align-items: center; height: 26px; padding-left: 11px; background: #5a860f; color: #fff; font-size: 11px; }
.badge { width: 18px; height: 18px; margin: 0 9px 0 -2px; }
.facts { display: flex; height: 127px; margin: 2px 0 20px; padding: 12px 15px; background: #efefef; }
.score { width: 325px; }
.score h3 { font-size: 20px; font-weight: 400; line-height: 24px; margin-bottom: 6px; }
.score h3 a { font-family: "DejaVu Serif Condensed", "DejaVu Serif", serif; font-size: 20px; }
.score dl { display: grid; grid-template-columns: 169px auto; line-height: 15px; }
.pair { display: grid; grid-template-columns: 1fr 1fr; gap: 24px; align-items: start; }
.pair + .pair { margin-top: 20px; }
table { border-collapse: separate; border-spacing: 0; width: 100%; }
.squad { margin-top: 2px; font-size: 12px; line-height: 15px; }
.squad td { height: 29px; padding: 2px 0 0; background: #efefef; border-bottom: 2px solid #fff; }
.squad tr:last-child td { height: 27px; border-bottom: 0; }
.squad .last td { height: 28px; border-bottom: 1px dashed #000; }
.squad td.no { width: 50px; padding-left: 12px; }
.goals td:first-child { padding-left: 12px; }
.goals td.min { width: 26px; }
.squad.goals td { background: #efebef; }

aside { width: 284px; display: flex; flex-direction: column; gap: 12px; }
.side { padding: 11px 12px 24px; }
.side h2 { font-size: 11px; line-height: 20px; border-top: 5px solid #424142; }
.league { margin: 17px 0 21px; }
.league th { height: 20px; padding: 0; text-align: center; }
.league td { height: 21px; padding: 0; background: #efefef; border-bottom: 1px solid #fff; }
.league tr:last-child td { height: 20px; border-bottom: 0; }
.league .cut td { border-bottom-color: #000; }
.league .pos { width: 26px; padding-right: 9px; text-align: right; }
.league td.num { text-align: right; padding-right: 5px; width: 22px; }
.league td.num:nth-child(3) { width: 24px; }
.more { display: flex; align-items: center; height: 26px; border-top: 1px solid #e1e1e1; border-bottom: 1px solid #e1e1e1; }
.more a { display: flex; align-items: center; gap: 6px; }
.more svg { width: 12px; height: 12px; }
.results { margin: 17px 0 20px; }
.results li { height: 48px; padding: 7px 10px; line-height: 17px; background: #efefef; border-bottom: 1px solid #dedfde; margin-bottom: 1px; }
.results time { color: #5a595a; }

.scroll { display: flex; flex-direction: column; width: 16px; background: repeating-conic-gradient(#fff 0 25%, #d6d3ce 0 50%) 0 0 / 2px 2px; }
.scroll button { height: 16px; }
.before { flex: 71; }
.thumb { flex: 235; }
.after { flex: 500; }

.status { display: flex; align-items: stretch; gap: 2px; height: 24px; flex: none; padding: 4px 0 2px; border-top: 1px solid #fff; }
.panel { display: flex; align-items: center; gap: 4px; border: 1px solid; border-color: #848284 #fff #fff #848284; }
.grow { flex: 1; }
.small { width: 22px; }
.zone { width: 151px; padding-left: 1px; }
.prot { width: 35px; padding-left: 2px; gap: 6px; }
.mag { width: 78px; padding-left: 4px; gap: 0; border-right: 0; }
.mag .dn { margin-left: 12px; }
.grip { width: 12px; height: 12px; align-self: flex-end; }

.taskbar { display: flex; align-items: center; height: 27px; flex: none; border-top: 1px solid #fff; padding: 0 1px 0 2px; }
.start { width: 52px; height: 22px; gap: 2px; font-weight: 700; }
.taskbar .sep { margin-left: 8px; }
.quick { display: flex; gap: 7px; margin: 0 16px 0 7px; }
.taskbar > .mo { align-self: flex-start; margin-top: 7px; }
.taskbar > .mo + .sep { margin: 0 5px 0 6px; }
.tasks { display: flex; flex: 1; gap: 3px; min-width: 0; }
.tasks button { flex: 1 1 0; min-width: 0; height: 22px; padding: 0 4px 0 3px; gap: 3px; justify-content: flex-start; }
.tasks span { flex: 1; min-width: 0; overflow: hidden; text-align: left; white-space: pre; }
.tasks .active { font-weight: 700; border-color: #424142 #fff #fff #424142; box-shadow: inset 1px 1px 0 #848284; background: repeating-conic-gradient(#fff 0 25%, #e4e2de 0 50%) 0 0 / 2px 2px; }
.tray { display: flex; align-items: center; gap: 4px; width: 96px; height: 22px; margin-left: 6px; padding: 0 8px 0 5px; border: 1px solid; border-color: #848284 #fff #fff #848284; }
.tray time { margin-left: auto; }
.flip { transform: scaleX(-1); }
</style>
